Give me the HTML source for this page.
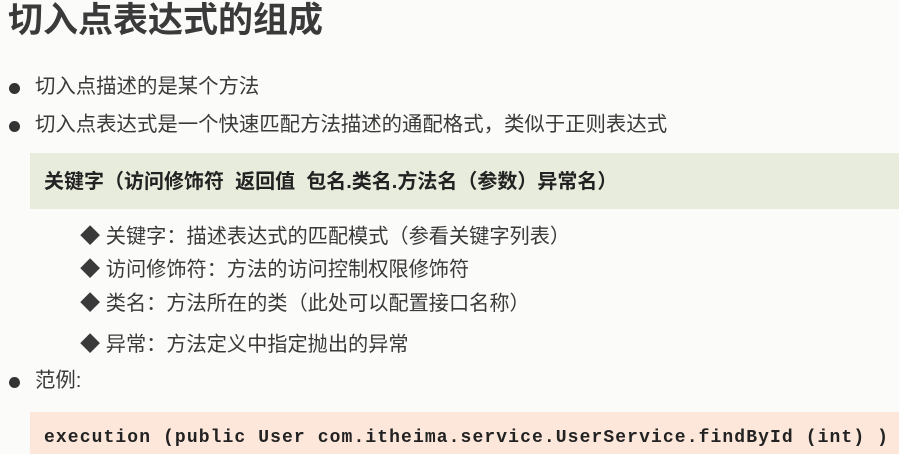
<!DOCTYPE html>
<html><head><meta charset="utf-8"><style>
body{margin:0;width:899px;height:454px;background:#fbfbf9;position:relative;overflow:hidden;font-family:"Liberation Sans","Noto Sans CJK SC",sans-serif;color:#333}
.a{position:absolute;white-space:nowrap;line-height:1}
.t{left:8px;top:3px;font-size:35px;font-weight:bold;color:#3a3a3a}
.b{font-size:20.4px;color:#3a3a3a}
.dot{position:absolute;width:11px;height:11px;border-radius:50%;background:#333}
.g{position:absolute;left:30px;top:153px;width:869px;height:56px;background:#e8ecdc}
.o{position:absolute;left:30px;top:412px;width:869px;height:42px;background:#fce7da}
.s{font-size:20.2px;color:#3a3a3a}
.code{font-family:"Liberation Mono",monospace;font-weight:bold;font-size:18px;letter-spacing:1.1px;color:#222}
</style></head><body>
<div class="a t">切入点表达式的组成</div>
<div class="dot" style="left:9px;top:83px"></div>
<div class="a b" style="left:35px;top:77px">切入点描述的是某个方法</div>
<div class="dot" style="left:9px;top:121px"></div>
<div class="a b" style="left:35px;top:115px">切入点表达式是一个快速匹配方法描述的通配格式，类似于正则表达式</div>
<div class="g"></div>
<div class="a" style="left:44px;top:172px;font-size:20px;font-weight:bold;color:#222">关键字（访问修饰符&nbsp; 返回值&nbsp; 包名.类名.方法名（参数）异常名）</div>
<div class="a s" style="left:80px;top:227px">◆ 关键字：描述表达式的匹配模式（参看关键字列表）</div>
<div class="a s" style="left:80px;top:260px">◆ 访问修饰符：方法的访问控制权限修饰符</div>
<div class="a s" style="left:80px;top:294px">◆ 类名：方法所在的类（此处可以配置接口名称）</div>
<div class="a s" style="left:80px;top:335px">◆ 异常：方法定义中指定抛出的异常</div>
<div class="dot" style="left:9px;top:377px"></div>
<div class="a b" style="left:35px;top:371px">范例:</div>
<div class="o"></div>
<div class="a code" style="left:44px;top:429px">execution (public User com.itheima.service.UserService.findById (int) )</div>
</body></html>
